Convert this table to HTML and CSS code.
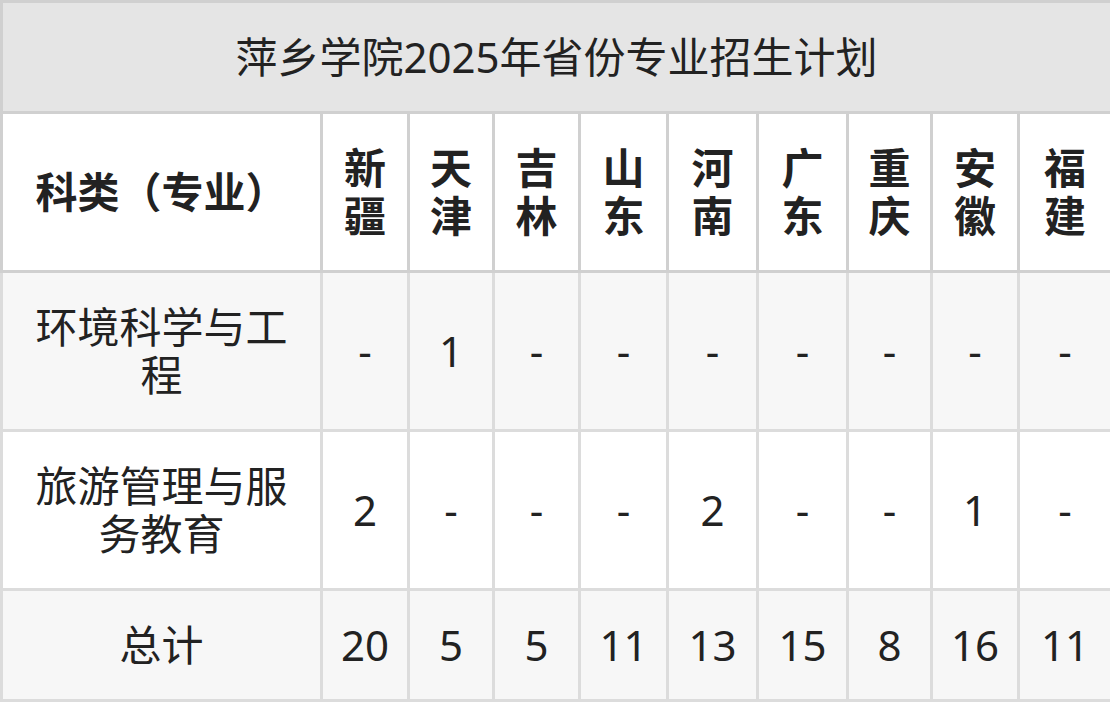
FILE: index.html
```html
<!DOCTYPE html>
<html lang="zh-CN">
<head>
<meta charset="utf-8">
<title>萍乡学院2025年省份专业招生计划</title>
<link rel="stylesheet" href="styles.css">
</head>
<body>
<table class="plan">
  <colgroup>
    <col class="c-major">
    <col class="c1"><col class="c2"><col class="c3"><col class="c4"><col class="c5">
    <col class="c6"><col class="c7"><col class="c8"><col class="c9">
  </colgroup>
  <thead>
    <tr class="title-row"><th colspan="10">萍乡学院2025年省份专业招生计划</th></tr>
    <tr class="head-row">
      <th>科类（专业）</th>
      <th>新疆</th><th>天津</th><th>吉林</th><th>山东</th><th>河南</th>
      <th>广东</th><th>重庆</th><th>安徽</th><th>福建</th>
    </tr>
  </thead>
  <tbody>
    <tr class="alt">
      <td>环境科学与工程</td>
      <td>-</td><td>1</td><td>-</td><td>-</td><td>-</td><td>-</td><td>-</td><td>-</td><td>-</td>
    </tr>
    <tr>
      <td>旅游管理与服务教育</td>
      <td>2</td><td>-</td><td>-</td><td>-</td><td>2</td><td>-</td><td>-</td><td>1</td><td>-</td>
    </tr>
    <tr class="alt">
      <td>总计</td>
      <td>20</td><td>5</td><td>5</td><td>11</td><td>13</td><td>15</td><td>8</td><td>16</td><td>11</td>
    </tr>
  </tbody>
</table>
</body>
</html>
```
FILE: styles.css
```css
html, body {
  margin: 0;
  padding: 0;
  background: #ffffff;
}
.plan {
  width: 1110px;
  table-layout: fixed;
  border-collapse: collapse;
  font-family: "Noto Sans", "Noto Sans CJK SC", sans-serif;
  font-size: 42px;
  line-height: 48px;
  color: #222222;
}
.c-major { width: 320px; }
.c1 { width: 87px; }
.c2 { width: 85px; }
.c3 { width: 86px; }
.c4 { width: 88px; }
.c5 { width: 90px; }
.c6 { width: 90px; }
.c7 { width: 84px; }
.c8 { width: 87px; }
.c9 { width: 93px; }
.plan th,
.plan td {
  border: 3px solid #d6d6d6;
  padding: 30px 12px;
  text-align: center;
  vertical-align: middle;
}
.plan td:first-child,
.plan th:first-child {
  padding-left: 20px;
  padding-right: 20px;
}
.title-row th {
  background: #e5e5e5;
  font-weight: 400;
  border-color: #d0d0d0;
}
.head-row th {
  background: #ffffff;
  font-weight: 700;
  border-color: #d0d0d0;
}
.plan tbody tr {
  background: #ffffff;
}
.plan tbody tr.alt {
  background: #f7f7f7;
}
.plan tbody td {
  border-color: #dcdcdc;
}
```
